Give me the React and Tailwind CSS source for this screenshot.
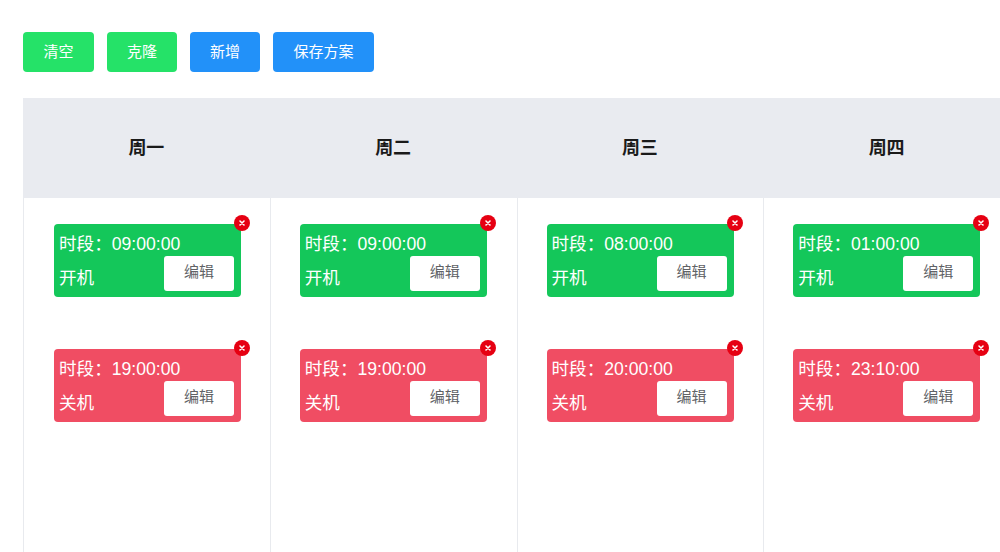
import React from 'react';

const font = "font-['Liberation_Sans','Noto_Sans_CJK_SC',sans-serif]";

const days = [
  { name: '周一', on: '09:00:00', off: '19:00:00', pad: 'pl-[30px]' },
  { name: '周二', on: '09:00:00', off: '19:00:00', pad: 'pl-[29px]' },
  { name: '周三', on: '08:00:00', off: '20:00:00', pad: 'pl-[29px]' },
  { name: '周四', on: '01:00:00', off: '23:10:00', pad: 'pl-[29px]' },
];

const ToolButton = ({ label, color, width }) => (
  <button className={`h-10 rounded-[4px] text-[15px] text-white ${color} ${width}`}>{label}</button>
);

const Slot = ({ time, label, color }) => (
  <div className={`relative h-[73px] w-[187px] rounded-[4px] pl-[5px] text-[17.6px] text-white ${color}`}>
    <div className="h-10 pt-2 leading-6">{'时段\uFF1A' + time}</div>
    <div className="absolute bottom-[7px] left-[5px] leading-6">{label}</div>
    <button className="absolute bottom-[6px] right-[7px] h-[35px] w-[70px] rounded-[3px] bg-white pb-[2px] text-[15px] text-[#606266]">编辑</button>
    <span className="absolute -right-[9px] -top-[9px] flex h-4 w-4 items-center justify-center rounded-full bg-[#e60012]">
      <svg width="8" height="8" viewBox="0 0 8 8">
        <path d="M2 2l4 4M6 2l-4 4" stroke="#fff" strokeWidth="1.6" strokeLinecap="round" />
      </svg>
    </span>
  </div>
);

export default function App() {
  return (
    <div lang="zh-CN" className={`h-[552px] w-[1000px] overflow-hidden bg-white ${font}`}>
      <div className="flex gap-[13px] pl-[23px] pt-8">
        <ToolButton label="清空" color="bg-[#25e268]" width="w-[71px]" />
        <ToolButton label="克隆" color="bg-[#25e268]" width="w-[70px]" />
        <ToolButton label="新增" color="bg-[#2291f9]" width="w-[70px]" />
        <ToolButton label="保存方案" color="bg-[#2291f9]" width="w-[101px]" />
      </div>

      <div className="ml-[23px] mt-[26px] flex w-[987px]">
        {days.map((day) => (
          <div key={day.name} className="w-[246.75px] shrink-0">
            <div className="flex h-[100px] items-center justify-center bg-[#e9ebf0] text-lg font-bold text-[#1a1a1a]">
              {day.name}
            </div>
            <div className={`flex h-[354px] flex-col gap-[52px] border-l border-[#e8eaee] pt-[26px] ${day.pad}`}>
              <Slot time={day.on} label="开机" color="bg-[#14c75a]" />
              <Slot time={day.off} label="关机" color="bg-[#f04d63]" />
            </div>
          </div>
        ))}
      </div>
    </div>
  );
}
